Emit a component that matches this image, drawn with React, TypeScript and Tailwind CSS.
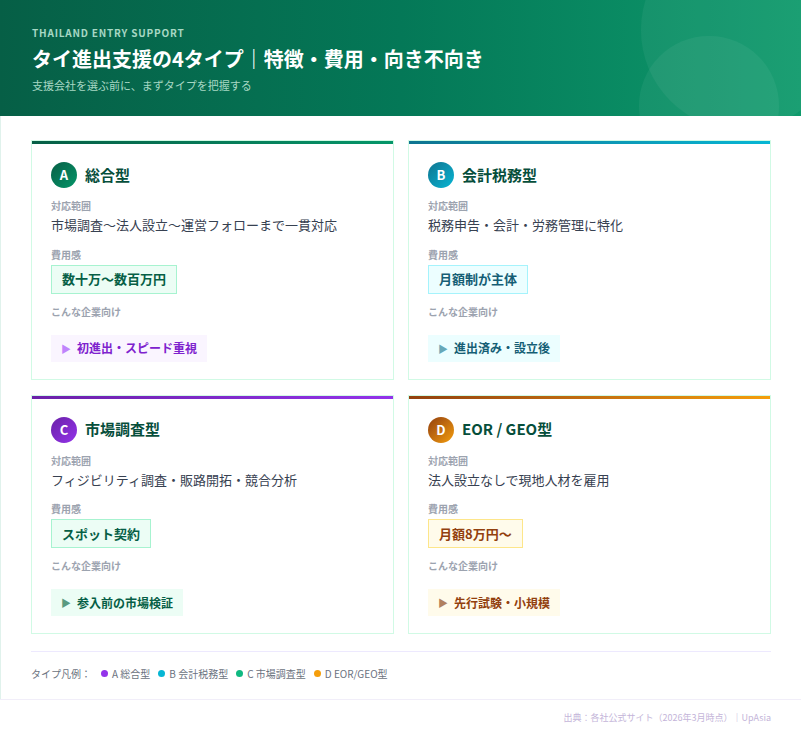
const font = { fontFamily: '"Noto Sans CJK JP", "Noto Sans", sans-serif' };

type TypeCard = {
  letter: string;
  name: string;
  scope: string;
  cost: string;
  target: string;
  bar: string;
  circle: string;
  costTag: string;
  targetTag: string;
  arrow: string;
};

const cards: TypeCard[] = [
  {
    letter: 'A',
    name: '総合型',
    scope: '市場調査〜法人設立〜運営フォローまで一貫対応',
    cost: '数十万〜数百万円',
    target: '初進出・スピード重視',
    bar: 'bg-gradient-to-r from-[#065f46] to-[#059669]',
    circle: 'bg-gradient-to-br from-[#065f46] to-[#059669]',
    costTag: 'bg-[#ecfdf5] border-[#a7f3d0] text-[#065f46]',
    targetTag: 'bg-[#faf5ff] text-[#7e22ce]',
    arrow: 'text-[#c084fc]',
  },
  {
    letter: 'B',
    name: '会計税務型',
    scope: '税務申告・会計・労務管理に特化',
    cost: '月額制が主体',
    target: '進出済み・設立後',
    bar: 'bg-gradient-to-r from-[#0e7490] to-[#06b6d4]',
    circle: 'bg-gradient-to-br from-[#0e7490] to-[#06b6d4]',
    costTag: 'bg-[#ecfeff] border-[#a5f3fc] text-[#155e75]',
    targetTag: 'bg-[#ecfeff] text-[#155e75]',
    arrow: 'text-[#67a8b8]',
  },
  {
    letter: 'C',
    name: '市場調査型',
    scope: 'フィジビリティ調査・販路開拓・競合分析',
    cost: 'スポット契約',
    target: '参入前の市場検証',
    bar: 'bg-gradient-to-r from-[#6b21a8] to-[#9333ea]',
    circle: 'bg-gradient-to-br from-[#6b21a8] to-[#9333ea]',
    costTag: 'bg-[#ecfdf5] border-[#a7f3d0] text-[#065f46]',
    targetTag: 'bg-[#ecfdf5] text-[#065f46]',
    arrow: 'text-[#5a9a80]',
  },
  {
    letter: 'D',
    name: 'EOR / GEO型',
    scope: '法人設立なしで現地人材を雇用',
    cost: '月額8万円〜',
    target: '先行試験・小規模',
    bar: 'bg-gradient-to-r from-[#92400e] to-[#f59e0b]',
    circle: 'bg-gradient-to-br from-[#92400e] to-[#f59e0b]',
    costTag: 'bg-[#fffbeb] border-[#fde68a] text-[#92400e]',
    targetTag: 'bg-[#fffbeb] text-[#92400e]',
    arrow: 'text-[#b08060]',
  },
];

const Card = ({ c }: { c: TypeCard }) => (
  <div className="border border-[#d1fae5] bg-white">
    <div className={`h-[3px] ${c.bar}`} />
    <div className="px-[19px] pt-[18px] pb-[17px]">
      <div className="flex items-center gap-[8px]">
        <div className={`w-[26px] h-[26px] rounded-full flex items-center justify-center text-white text-[13px] font-bold ${c.circle}`}>
          {c.letter}
        </div>
        <div className="text-[15px] font-bold text-[#064e3b]">{c.name}</div>
      </div>
      <div className="mt-[10px] text-[10px] font-bold text-[#9ca3af]">対応範囲</div>
      <div className="mt-[2px] text-[13px] text-[#374151]">{c.scope}</div>
      <div className="mt-[12px] text-[10px] font-bold text-[#9ca3af]">費用感</div>
      <div className="mt-[3px] flex">
        <div className={`border px-[10px] h-[29px] flex items-center text-[13px] font-bold ${c.costTag}`}>{c.cost}</div>
      </div>
      <div className="mt-[10px] text-[10px] font-bold text-[#9ca3af]">こんな企業向け</div>
      <div className="mt-[16px] flex">
        <div className={`px-[10px] h-[27px] flex items-center gap-[6px] text-[12px] font-bold ${c.targetTag}`}>
          <span className={`text-[10px] ${c.arrow}`}>▶</span>
          {c.target}
        </div>
      </div>
    </div>
  </div>
);

const legend = [
  { label: 'A 総合型', dot: 'bg-[#9333ea]' },
  { label: 'B 会計税務型', dot: 'bg-[#06b6d4]' },
  { label: 'C 市場調査型', dot: 'bg-[#10b981]' },
  { label: 'D EOR/GEO型', dot: 'bg-[#f59e0b]' },
];

export default function App() {
  return (
    <div className="w-[801px] h-[744px] bg-white overflow-hidden" style={font}>
      {/* Header */}
      <header className="relative h-[116px] overflow-hidden bg-gradient-to-r from-[#065f46] via-[#047857] to-[#0f9a6c] px-[32px] pt-[25px]">
        <div className="absolute right-[-40px] top-[-70px] w-[200px] h-[200px] rounded-full bg-white/5" />
        <div className="absolute right-[22px] top-[36px] w-[140px] h-[140px] rounded-full bg-white/5" />
        <div className="relative text-[10px] font-bold tracking-[0.08em] text-[#a7d8c4]">THAILAND ENTRY SUPPORT</div>
        <h1 className="relative mt-[4px] text-[20px] font-bold text-white leading-[30px]">
          タイ進出支援の4タイプ｜特徴・費用・向き不向き
        </h1>
        <p className="relative mt-[3px] text-[11px] text-[#a7d8c4]">支援会社を選ぶ前に、まずタイプを把握する</p>
      </header>

      <main className="px-[30px] pt-[24px] border-l border-[#e0f2ec]">
        <div className="grid grid-cols-2 gap-x-[14px] gap-y-[15px]">
          {cards.map((c) => (
            <Card key={c.letter} c={c} />
          ))}
        </div>
        <div className="mt-[17px] border-t border-[#ede9fe] pt-[14px] pb-[18px] flex items-center gap-[6px] text-[10px] text-[#6b7280]">
          <span className="mr-[4px]">タイプ凡例：</span>
          {legend.map((l) => (
            <span key={l.label} className="flex items-center gap-[4px] mr-[2px]">
              <span className={`w-[7px] h-[7px] rounded-full ${l.dot}`} />
              {l.label}
            </span>
          ))}
        </div>
      </main>
      <footer className="border-t border-[#f1eef9] px-[30px] pt-[11px] text-right text-[9px] text-[#c4b5d9]">
        出典：各社公式サイト（2026年3月時点）｜UpAsia
      </footer>
    </div>
  );
}
